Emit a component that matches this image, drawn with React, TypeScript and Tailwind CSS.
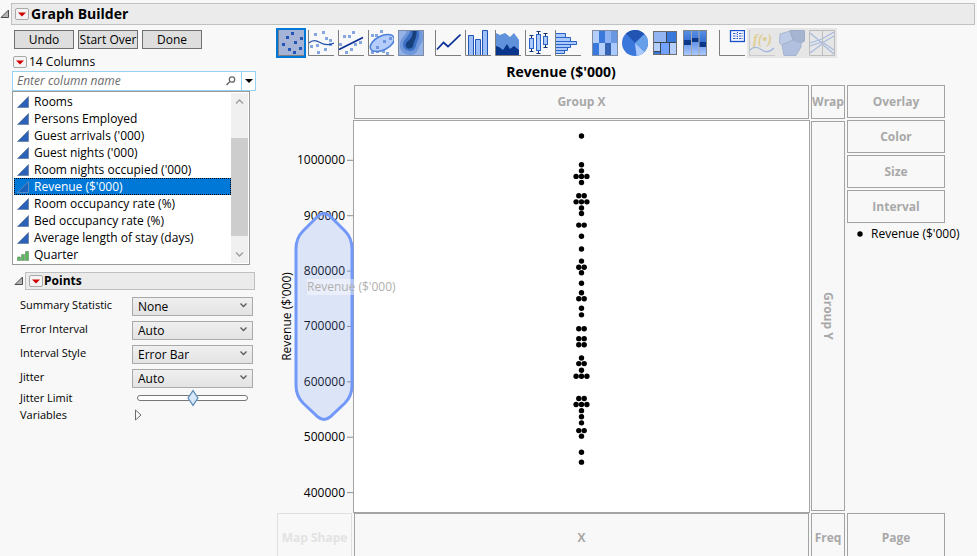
import React, { useState } from 'react';

const columns = [
  'Rooms',
  'Persons Employed',
  "Guest arrivals ('000)",
  "Guest nights ('000)",
  "Room nights occupied ('000)",
  "Revenue ($'000)",
  'Room occupancy rate (%)',
  'Bed occupancy rate (%)',
  'Average length of stay (days)',
  'Quarter',
];

const settings = [
  { id: 'summary', label: 'Summary Statistic', options: ['None', 'Mean', 'Median'] },
  { id: 'error', label: 'Error Interval', options: ['Auto', 'None', 'Range'] },
  { id: 'interval', label: 'Interval Style', options: ['Error Bar', 'Band'] },
  { id: 'jitter', label: 'Jitter', options: ['Auto', 'None', 'Centered Grid'] },
];

// y axis range, in thousands
const AXIS_MAX = 1071;
const AXIS_MIN = 365;
const ticks = [1000, 900, 800, 700, 600, 500, 400];

// [value in thousands, number of points sharing it]
const points: [number, number][] = [
  [1044, 1], [992, 1], [981, 1], [971, 3], [960, 1], [936, 2], [925, 3], [914, 1], [904, 1],
  [883, 2], [863, 1], [840, 1], [818, 1], [807, 2], [797, 1], [778, 1], [761, 1], [750, 2],
  [733, 1], [721, 1], [696, 2], [678, 2], [667, 2], [643, 1], [633, 2], [621, 1], [610, 3],
  [570, 2], [559, 3], [548, 1], [537, 1], [526, 1], [512, 2], [502, 1], [473, 1], [455, 1],
];

const toY = (value: number) => `${((AXIS_MAX - value) / (AXIS_MAX - AXIS_MIN)) * 100}%`;

function Axes() {
  return <path d="M0.5 0V25.5H26" fill="none" stroke="#7d7d7d" />;
}

function Dots({ at, color }: { at: [number, number][]; color: string }) {
  return (
    <g fill={color}>
      {at.map(([x, y]) => (
        <rect key={`${x}-${y}`} x={x - 1.5} y={y - 1.5} width="3" height="3" />
      ))}
    </g>
  );
}

function BoxPlot({ x, top, bottom, boxTop, boxBottom }: { x: number; top: number; bottom: number; boxTop: number; boxBottom: number }) {
  return (
    <g>
      <path d={`M${x - 2} ${top}h4M${x} ${top}V${bottom}M${x - 2} ${bottom}h4`} stroke="#12306e" fill="none" />
      <rect x={x - 2} y={boxTop} width="4" height={boxBottom - boxTop} fill="#a9c9ff" stroke="#2a63c4" />
    </g>
  );
}

const icons: Record<string, React.ReactNode> = {
  Points: (
    <>
      <Axes />
      <Dots color="#2455b4" at={[[14.5, 3.5], [9.5, 7.5], [23.5, 8.5], [5.5, 14.5], [17.5, 12.5], [11.5, 19.5], [22.5, 18.5], [16.5, 22.5]]} />
    </>
  ),
  Smoother: (
    <>
      <Axes />
      <Dots color="#86a6df" at={[[7.5, 4.5], [15.5, 2.5], [18.5, 8.5], [22.5, 10.5], [3.5, 16.5], [9.5, 15.5], [10.5, 22.5], [17.5, 19.5], [22.5, 14.5]]} />
      <path d="M1 13C4 10 8 10 12 12.5S20 16 26 13" fill="none" stroke="#2453ab" strokeWidth="1.2" />
    </>
  ),
  'Line of Fit': (
    <>
      <Axes />
      <Dots color="#86a6df" at={[[15.5, 2.5], [6.5, 6.5], [11.5, 6.5], [2.5, 14.5], [17.5, 14.5], [22.5, 12.5], [8.5, 22.5], [13.5, 19.5]]} />
      <path d="M1 19.5L25 7.5" stroke="#0b2f96" strokeWidth="1.7" />
    </>
  ),
  Ellipse: (
    <>
      <Axes />
      <Dots color="#86a6df" at={[[13.5, 1.5], [4.5, 5.5], [8.5, 5.5], [4.5, 22.5], [9.5, 21.5], [15.5, 21.5], [19.5, 23.5]]} />
      <ellipse cx="14.3" cy="13" rx="13" ry="7" transform="rotate(-27 14.3 13)" fill="#b5cdfa" stroke="#4d7fdb" strokeWidth="1.5" />
      <Dots color="#6f96dc" at={[[22.5, 8.5], [16.5, 11.5], [9.5, 17.5]]} />
    </>
  ),
  Contour: (
    <>
      <rect width="26" height="26" fill="#94b2e6" />
      <path d="M9 0C8 5 3 7 2 13C1 21 6 25 13 25C20 24 20 18 22 15C26 11 25 5 24 0Z" fill="#6f97da" />
      <path d="M12 0C12 6 6 8 5 14C5 19 9 21 13 21C18 20 18 15 19 12C22 8 21 4 21 0Z" fill="#3c70c4" />
      <path d="M14.5 0C15 6 13 9 9 12C6 16 9 19 12 18.5C16 18 15 13 17 10C19 6 18 3 19 0Z" fill="#173f7c" />
      <rect x="0.5" y="0.5" width="25" height="25" fill="none" stroke="#7d8ba3" />
    </>
  ),
  Line: (
    <>
      <Axes />
      <path d="M2 19.5L8.5 12.5L13 16.5L25.5 4.5" fill="none" stroke="#0b2f96" strokeWidth="1.7" />
    </>
  ),
  Bar: (
    <>
      <path d="M3.5 25.5V5.5h5v20M10.5 25.5V9.5h5v16M17.5 25.5V0.5h5v25" fill="#9dc0fb" stroke="#1f56b5" />
      <Axes />
    </>
  ),
  Area: (
    <>
      <path d="M1 3L5 5L10 3L15 7L19 3L24 10V25H1Z" fill="#5f92db" />
      <path d="M1 16L4 17L8 20L12 14L15 19L19 16L24 20V25H1Z" fill="#08348c" />
      <Axes />
    </>
  ),
  'Box Plot': (
    <>
      <Axes />
      <BoxPlot x={6.5} top={5.5} bottom={21.5} boxTop={8.5} boxBottom={18.5} />
      <BoxPlot x={13.5} top={1.5} bottom={23.5} boxTop={4.5} boxBottom={20.5} />
      <BoxPlot x={20.5} top={3.5} bottom={17.5} boxTop={6.5} boxBottom={14.5} />
    </>
  ),
  Histogram: (
    <>
      <path d="M0.5 3.5h10v4h-10zM0.5 7.5h15v4h-15zM0.5 11.5h21v3h-21zM0.5 14.5h15v3h-15zM0.5 17.5h12v3h-12zM0.5 20.5h9v3h-9z" fill="#a9c9ff" stroke="#2a63c4" />
      <Axes />
    </>
  ),
  Heatmap: (
    <>
      <path d="M0 0h7v13H0zM7 13h6v13H7z" fill="#b5cffb" />
      <path d="M7 0h6v13H7zM0 13h7v13H0z" fill="#3a78dc" />
      <path d="M13 0h6v13h-6z" fill="#8db2f2" />
      <path d="M19 0h7v13h-7z" fill="#6a97e2" />
      <path d="M13 13h6v13h-6z" fill="#3463b4" />
      <path d="M19 13h7v13h-7z" fill="#a9c9ff" />
      <rect x="0.5" y="0.5" width="25" height="25" fill="none" stroke="#7d8ba3" />
    </>
  ),
  Pie: (
    <>
      <circle cx="13" cy="13" r="13" fill="#3a78dc" />
      <path d="M13 13L4 3.6A13 13 0 0 1 22.5 4.1Z" fill="#2254b3" />
      <path d="M13 13L22.5 4.1A13 13 0 0 1 22.5 21.9Z" fill="#65a0e9" />
      <path d="M13 13L22.5 21.9A13 13 0 0 1 14.5 25.9Z" fill="#a9c9ff" />
    </>
  ),
  Treemap: (
    <>
      <rect x="1" y="1" width="24" height="24" fill="#b5cffb" />
      <path d="M14 2h11v11H14zM2 21h6v4H2z" fill="#3a78dc" />
      <path d="M2 2h12v11H2z" fill="#93b6f2" />
      <path d="M9 13h8v12H9z" fill="#72a2fb" />
      <path d="M14.5 1.5v11M1.5 12.5h23M8.5 12.5v12M17.5 12.5v12M1.5 21.5h7" fill="none" stroke="#3b4656" />
      <rect x="1.5" y="1.5" width="23" height="23" fill="none" stroke="#6e6e6e" />
    </>
  ),
  Mosaic: (
    <>
      <defs>
        <linearGradient id="mosaic-upper" x2="0" y2="1">
          <stop offset="0" stopColor="#5a90e6" />
          <stop offset="1" stopColor="#2a66cc" />
        </linearGradient>
        <linearGradient id="mosaic-lower" x2="0" y2="1">
          <stop offset="0" stopColor="#5c90e8" />
          <stop offset="1" stopColor="#b0ccff" />
        </linearGradient>
      </defs>
      <path d="M1 0h24v16H1z" fill="url(#mosaic-upper)" />
      <path d="M1 15h8v11H1zM9 11h8v15H9zM17 17h8v9h-8z" fill="url(#mosaic-lower)" />
      <path d="M1 10h8v5H1zM9 8h8v4H9zM17 12h8v5h-8z" fill="#0b3788" />
      <path d="M9.5 0v26M17 0v26" stroke="#a9a9a9" />
      <rect x="1.5" y="0.5" width="23" height="25" fill="none" stroke="#858585" />
    </>
  ),
  'Caption Box': (
    <>
      <Axes />
      <rect x="11.5" y="0.5" width="14" height="11" fill="#f4f7ff" stroke="#1650cc" strokeWidth="1.3" />
      <path d="M14 3.5h3.5M14 6h3.5M14 8.5h3.5M20 3.5h3.5M20 6h3.5M20 8.5h3.5" stroke="#3a62bd" strokeDasharray="2 0.5" />
      <path d="M18.5 2v8" stroke="#1650cc" strokeDasharray="1 1" />
    </>
  ),
  Formula: (
    <>
      <path d="M0.5 0V25.5H26" fill="none" stroke="#c9c9c9" />
      <text x="4" y="14" fontSize="14" fontStyle="italic" fontWeight="bold" fill="#dfcf95" fontFamily="Liberation Serif, serif">
        f(•)
      </text>
      <path d="M1 20C5 16 9 17 13 20S21 22 25 18" fill="none" stroke="#a5b7db" strokeWidth="1.3" />
    </>
  ),
  'Map Shapes': (
    <>
      <path d="M1 4L11 1L14 10L3 15L0.5 13Z" fill="#bdcbe6" stroke="#a9b6cf" />
      <path d="M11 0.5H25.5V11L22 13L14 10Z" fill="#a5b4d1" stroke="#a0adc6" />
      <path d="M3 15L14 10L22 13V17L17 25.5H5Z" fill="#b1c0df" stroke="#a5b3d0" />
    </>
  ),
  Parallel: (
    <>
      <path d="M1 3L13 13L25 6M1 13L13 9L25 2M1 16L13 12L25 20M1 23L13 14L25 24" fill="none" stroke="#a9bbdf" strokeWidth="1.3" />
      <path d="M0.5 0.5h25v25h-25zM13.5 0v26" fill="none" stroke="#bdbdbd" />
    </>
  ),
};

const toolGroups = [
  ['Points', 'Smoother', 'Line of Fit', 'Ellipse', 'Contour'],
  ['Line', 'Bar', 'Area', 'Box Plot', 'Histogram'],
  ['Heatmap', 'Pie', 'Treemap', 'Mosaic'],
  ['Caption Box', 'Formula', 'Map Shapes', 'Parallel'],
];
const disabledTools = ['Formula', 'Map Shapes', 'Parallel'];

function Disclosure() {
  return (
    <svg width="10" height="10" viewBox="0 0 10 10" className="shrink-0">
      <path d="M8.5 1V8.5H1Z" fill="#b4b4b4" stroke="#4d4d4d" />
    </svg>
  );
}

function RedTriangle({ label }: { label: string }) {
  return (
    <button aria-label={label} className="flex h-3 w-3.5 shrink-0 items-center justify-center rounded-xs border border-[#a8a8a8] bg-[#f4f4f4]">
      <svg width="8" height="5" viewBox="0 0 8 5" className="shrink-0">
        <path d="M0 0.5H8L4 4.5Z" fill="#d00000" />
      </svg>
    </button>
  );
}

function ColumnIcon({ ordinal, selected }: { ordinal: boolean; selected: boolean }) {
  return (
    <svg width="12" height="12" viewBox="0 0 12 12" className="shrink-0">
      {ordinal ? (
        <path d="M0.5 8h3v3.5h-3zM4.5 5.5h3v6h-3zM8.5 2.5h3v9h-3z" fill="#57b957" stroke="#7c9a7c" strokeWidth="0.8" />
      ) : (
        <path d="M11.5 0.5V11.5H0.5Z" fill={selected ? '#1a63bd' : '#2b62b8'} stroke={selected ? '#6d92bd' : '#6b7f9e'} strokeWidth="0.8" />
      )}
    </svg>
  );
}

function DropZone({ label, className = '' }: { label: string; className?: string }) {
  return (
    <div className={`flex items-center justify-center border text-[12px] font-bold ${className}`}>
      {label}
    </div>
  );
}

function ColumnPanel() {
  const [selected, setSelected] = useState("Revenue ($'000)");

  return (
    <section>
      <div className="flex h-4.5 items-center gap-0.5 px-px">
        <RedTriangle label="Column options" />
        <span>14 Columns</span>
      </div>
      <div className="flex h-5 items-stretch border border-[#99d1f0] bg-white">
        <input aria-label="Column name" placeholder="Enter column name" className="min-w-0 flex-1 px-1 italic outline-none placeholder:text-[#6b6b6b]" />
        <svg width="12" height="12" viewBox="0 0 12 12" className="mr-1 self-center">
          <circle cx="7" cy="4.5" r="2.7" fill="none" stroke="#666" strokeWidth="1.3" />
          <path d="M5 6.5L1.5 10" stroke="#666" strokeWidth="1.5" />
        </svg>
        <button aria-label="Search options" className="flex w-3.5 items-center justify-center border-l border-[#99d1f0]">
          <svg width="8" height="4" viewBox="0 0 8 4">
            <path d="M0 0H8L4 4Z" fill="#000" />
          </svg>
        </button>
      </div>
      <div className="mr-1.5 flex border border-[#9b9b9b] bg-white p-px">
        <ul className="min-w-0 flex-1">
          {columns.map((name) => (
            <li key={name}>
              <button
                onClick={() => setSelected(name)}
                className={`flex h-[17px] w-full items-center gap-[5px] border pl-0.5 leading-none whitespace-nowrap ${
                  name === selected ? 'border-dotted border-black bg-[#0078d7] text-white' : 'border-transparent'
                }`}
              >
                <ColumnIcon ordinal={name === 'Quarter'} selected={name === selected} />
                {name}
              </button>
            </li>
          ))}
        </ul>
        <div className="flex w-[17px] flex-col items-center bg-[#f0f0f0]">
          <svg width="9" height="17" viewBox="0 0 9 17">
            <path d="M1 10.5L4.5 7L8 10.5" fill="none" stroke="#a0a0a0" strokeWidth="1.5" />
          </svg>
          <div className="mt-7 w-full flex-1 bg-[#cdcdcd]" />
          <svg width="9" height="27" viewBox="0 0 9 27">
            <path d="M1 16.5L4.5 20L8 16.5" fill="none" stroke="#a0a0a0" strokeWidth="1.5" />
          </svg>
        </div>
      </div>
    </section>
  );
}

function PointsPanel() {
  return (
    <section className="mt-[7px] pr-px">
      <div className="flex items-center gap-px pl-0.5">
        <Disclosure />
        <div className="flex h-[18px] flex-1 items-center gap-px border border-[#c0c0c0] bg-[#ebebeb] pl-[3px]">
          <RedTriangle label="Points options" />
          <h2 className="text-[12px] font-bold">Points</h2>
        </div>
      </div>
      <div className="mt-[7px] flex flex-col gap-[5px] pr-0.5 pl-2">
        {settings.map(({ id, label, options }) => (
          <div key={id} className="flex h-[19px] items-center">
            <label htmlFor={id} className="w-28 pb-1 text-[11px]">
              {label}
            </label>
            <div className="relative h-full flex-1">
              <select id={id} className="block h-full w-full appearance-none border border-[#a9a9a9] bg-linear-to-b from-[#f0f0f0] to-[#e3e3e3] pl-[5px] text-[12px] leading-none">
                {options.map((option) => (
                  <option key={option}>{option}</option>
                ))}
              </select>
              <svg width="7" height="5" viewBox="0 0 7 5" className="pointer-events-none absolute top-1.5 right-1.5">
                <path d="M0.5 0.5L3.5 3.5L6.5 0.5" fill="none" stroke="#5a5a5a" strokeWidth="1.3" />
              </svg>
            </div>
          </div>
        ))}
      </div>
      <div className="mt-px pr-0.5 pl-2 text-[11px]">
        <div className="flex h-[17px] items-center">
          <label htmlFor="limit" className="w-28">
            Jitter Limit
          </label>
          <input
            id="limit"
            type="range"
            defaultValue={50}
            className="mr-[5px] ml-[5px] h-1.5 min-w-0 flex-1 appearance-none rounded-full border border-[#777] bg-white [&::-webkit-slider-thumb]:h-2 [&::-webkit-slider-thumb]:w-2 [&::-webkit-slider-thumb]:[transform:scaleY(1.5)_rotate(45deg)] [&::-webkit-slider-thumb]:appearance-none [&::-webkit-slider-thumb]:border [&::-webkit-slider-thumb]:border-[#5f8bb8] [&::-webkit-slider-thumb]:bg-[#d6e8fa]"
          />
        </div>
        <div className="flex h-[17px] items-center">
          <span className="w-28">Variables</span>
          <button aria-label="Show variables" className="ml-[3px]">
            <svg width="7" height="12" viewBox="0 0 7 12">
              <path d="M0.5 1V11L6 6Z" fill="#f8f8f8" stroke="#6b6b6b" />
            </svg>
          </button>
        </div>
      </div>
    </section>
  );
}

function Toolbar() {
  const [active, setActive] = useState('Points');

  return (
    <div className="flex gap-[7px]">
      {toolGroups.map((group) => (
        <div key={group[0]} className="flex">
          {group.map((tool) => (
            <button
              key={tool}
              aria-label={tool}
              disabled={disabledTools.includes(tool)}
              onClick={() => setActive(tool)}
              className={`flex h-[30px] w-[30px] items-center justify-center disabled:bg-[#e6e6e6] ${
                tool === active ? 'border-2 border-[#0078d7] bg-[#a5b4d6]' : ''
              }`}
            >
              <svg width="26" height="26" viewBox="0 0 26 26" className="shrink-0">
                {icons[tool]}
              </svg>
            </button>
          ))}
        </div>
      ))}
    </div>
  );
}

function YAxis() {
  return (
    <div className="relative py-px">
      <svg className="block h-full w-full overflow-visible">
        {ticks.map((tick) => (
          <React.Fragment key={tick}>
            <line x1="70" x2="76" y1={toY(tick)} y2={toY(tick)} stroke="#8f8f8f" />
            <text x="68" y={toY(tick)} dy="4" textAnchor="end" fontSize="12">
              {tick * 1000}
            </text>
          </React.Fragment>
        ))}
        <svg x="0" y="50%" className="overflow-visible">
          <text transform="translate(14 0) rotate(-90)" textAnchor="middle" fontSize="12">
            Revenue ($'000)
          </text>
        </svg>
      </svg>
      <div className="absolute inset-y-0 left-4 z-10 flex items-center">
        <svg width="61" height="210" viewBox="0 0 61 210">
          <path
            d="M25 4Q31 -1 37 4L52 19Q59 26 59 37V173Q59 184 52 191L37 205Q31 210 25 205L10 191Q3 184 3 173V37Q3 26 10 19Z"
            fill="#6f97f8"
            fillOpacity="0.2"
            stroke="#7399f8"
            strokeWidth="3"
          />
        </svg>
      </div>
      <div className="absolute inset-y-0 left-[30px] z-20 flex items-center pb-[60px] whitespace-nowrap text-[#b0b0b0]">
        <span className="bg-white/40 leading-4">Revenue ($'000)</span>
      </div>
    </div>
  );
}

function Plot() {
  return (
    <div className="border border-[#a3a3a3] bg-white">
      <svg className="block h-full w-full">
        {points.map(([value, count]) => (
          <svg key={value} x="50%" y={toY(value)} className="overflow-visible">
            {Array.from({ length: count }, (_, i) => (
              <circle key={i} cx={(i - (count - 1) / 2) * 5.4} cy="0" r="2.7" />
            ))}
          </svg>
        ))}
      </svg>
    </div>
  );
}

function Graph() {
  return (
    <section className="flex min-w-0 flex-1 flex-col">
      <Toolbar />
      <div className="mt-0.5 flex min-h-0 flex-1 pl-px">
        <div className="flex min-w-0 flex-1 flex-col">
          <h2 className="h-[25px] text-center text-[14px] leading-6 font-bold">Revenue ($'000)</h2>
          <div className="grid min-h-0 flex-1 grid-cols-[75px_minmax(0,1fr)_34px] grid-rows-[34px_minmax(0,1fr)_43px] gap-x-px">
            <DropZone label="Group X" className="col-start-2 mx-px border-[#a3a3a3] text-[#a8a8a8]" />
            <DropZone label="Wrap" className="border-[#a3a3a3] text-[#a8a8a8]" />
            <div className="mt-px grid">
              <YAxis />
            </div>
            <div className="mt-px grid">
              <Plot />
            </div>
            <div className="grid py-0.5">
              <DropZone label="Group Y" className="border-[#a3a3a3] text-[#a8a8a8] [writing-mode:vertical-rl]" />
            </div>
            <DropZone label="Map Shape" className="border-b-0 border-[#e0e0e0] pt-1.5 text-[#e3e3e3]" />
            <DropZone label="X" className="mx-px border-b-0 border-[#a3a3a3] pt-1.5 text-[#a8a8a8]" />
            <DropZone label="Freq" className="border-b-0 border-[#a3a3a3] pt-1.5 text-[#a8a8a8]" />
          </div>
        </div>
        <aside className="ml-0.5 flex w-[98px] flex-col gap-0.5 pt-[25px]">
          {['Overlay', 'Color', 'Size', 'Interval'].map((zone) => (
            <DropZone key={zone} label={zone} className="h-[33px] border-[#a3a3a3] text-[#a8a8a8]" />
          ))}
          <div className="flex flex-1 items-start gap-2 pl-2.5 whitespace-nowrap">
            <svg width="6" height="18" viewBox="0 0 6 18" className="shrink-0">
              <circle cx="3" cy="9" r="2.7" />
            </svg>
            <span>Revenue ($'000)</span>
          </div>
          <DropZone label="Page" className="h-[43px] border-b-0 border-[#a3a3a3] pt-1.5 text-[#a8a8a8]" />
        </aside>
      </div>
    </section>
  );
}

export default function App() {
  return (
    <main className="flex h-screen flex-col overflow-hidden bg-[#f8f8f8] pt-[3px] font-['Open_Sans','Noto_Sans',sans-serif] text-[12px] leading-[18px] text-black">
      <header className="flex items-center gap-px pr-0.5">
        <Disclosure />
        <div className="flex h-[22px] flex-1 items-center gap-0.5 border border-[#c0c0c0] bg-[#ebebeb] pl-[3px]">
          <RedTriangle label="Graph Builder options" />
          <h1 className="text-[14px] font-bold">Graph Builder</h1>
        </div>
      </header>
      <div className="flex min-h-0 flex-1 pt-[3px] pr-8 pl-3">
        <div className="mr-5 w-[244px] shrink-0 pt-0.5">
          <div className="mb-1 flex gap-1 pl-0.5">
            {['Undo', 'Start Over', 'Done'].map((action) => (
              <button key={action} className="h-[19px] w-[60px] border border-[#707070] bg-[#dedede] leading-none whitespace-nowrap">
                {action}
              </button>
            ))}
          </div>
          <ColumnPanel />
          <PointsPanel />
        </div>
        <Graph />
      </div>
    </main>
  );
}
